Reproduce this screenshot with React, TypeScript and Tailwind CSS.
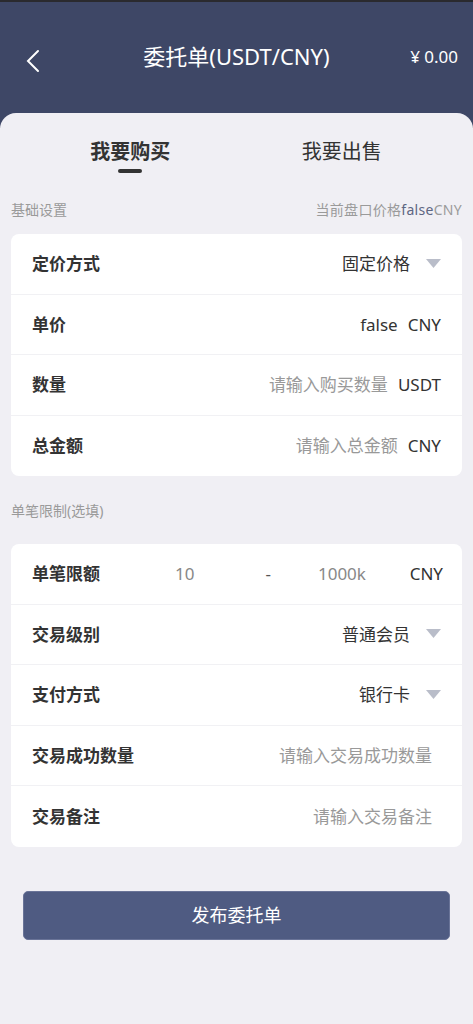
import React from "react";

const font = { fontFamily: '"Noto Sans", "Noto Sans CJK SC", sans-serif' };

const Caret: React.FC = () => (
  <svg width="15" height="10" viewBox="0 0 15 10" className="ml-4">
    <path d="M0 0 H15 L7.5 9 Z" fill="#b9bdc9" />
  </svg>
);

interface RowProps {
  label: string;
  children: React.ReactNode;
  last?: boolean;
}

const Row: React.FC<RowProps> = ({ label, children, last }) => (
  <div
    className={`flex items-center h-[60.5px] pl-[21px] pr-[21px] ${
      last ? "" : "border-b border-[#f1f1f4]"
    }`}
  >
    <span className="text-[17px] font-bold text-[#333]">{label}</span>
    <div className="flex-1 flex items-center justify-end text-[17px]">{children}</div>
  </div>
);

const App: React.FC = () => {
  return (
    <div className="min-h-[1024px] bg-[#f0eff4] flex flex-col" style={font}>
      {/* Header */}
      <div className="bg-[#3e4766] border-t-2 border-[#2a2a2e] h-[128px] shrink-0">
        <div className="relative flex items-center justify-center h-[113px]">
          <svg width="14" height="24" viewBox="0 0 14 24" className="absolute left-[26px] top-[47px]">
            <path d="M12 2 L2 12 L12 22" stroke="#fff" strokeWidth="2" fill="none" strokeLinecap="round" />
          </svg>
          <span className="text-white text-[22px] -mt-[4px]">委托单(USDT/CNY)</span>
          <span className="absolute right-[15px] text-white text-[17px] -mt-[4px]">¥ 0.00</span>
        </div>
      </div>

      {/* Body */}
      <div className="-mt-[15px] rounded-t-[16px] bg-[#f0eff4] flex-1">
        <div className="flex h-[66px] pt-[25px]">
          <div className="flex-1 flex flex-col items-center">
            <span className="text-[20px] font-bold text-[#333] ml-[24px] leading-[28px]">我要购买</span>
            <span className="mt-[3px] ml-[24px] w-[24px] h-[4px] rounded-full bg-[#333]" />
          </div>
          <div className="flex-1 flex flex-col items-center">
            <span className="text-[20px] text-[#333] leading-[28px] -ml-[26px]">我要出售</span>
          </div>
        </div>

        <div className="flex justify-between items-center px-[11px] mt-[21px] text-[14px] leading-[20px] text-[#9a9a9a]">
          <span>基础设置</span>
          <span className="tracking-[0.3px]">
            当前盘口价格<span className="text-[#5d6682]">false</span>CNY
          </span>
        </div>

        <div className="mx-[11px] mt-[14px] bg-white rounded-[8px]">
          <Row label="定价方式">
            <span className="text-[#333]">固定价格</span>
            <Caret />
          </Row>
          <Row label="单价">
            <span className="text-[#333]">false</span>
            <span className="text-[#333] ml-[10px]">CNY</span>
          </Row>
          <Row label="数量">
            <span className="text-[#999]">请输入购买数量</span>
            <span className="text-[#333] ml-[10px]">USDT</span>
          </Row>
          <Row label="总金额" last>
            <span className="text-[#999]">请输入总金额</span>
            <span className="text-[#333] ml-[10px]">CNY</span>
          </Row>
        </div>

        <div className="px-[11px] mt-[25px] text-[14px] leading-[20px] text-[#9a9a9a]">单笔限制(选填)</div>

        <div className="mx-[11px] mt-[23px] bg-white rounded-[8px]">
          <Row label="单笔限额">
            <div className="flex-1 flex items-center text-[17px]">
              <span className="text-[#888] ml-[75px]">10</span>
              <span className="text-[#555] ml-[71px]">-</span>
              <span className="text-[#888] ml-[47px]">1000k</span>
              <span className="text-[#333] ml-auto -mr-[2px]">CNY</span>
            </div>
          </Row>
          <Row label="交易级别">
            <span className="text-[#333]">普通会员</span>
            <Caret />
          </Row>
          <Row label="支付方式">
            <span className="text-[#333]">银行卡</span>
            <Caret />
          </Row>
          <Row label="交易成功数量">
            <span className="text-[#999] mr-[9px]">请输入交易成功数量</span>
          </Row>
          <Row label="交易备注" last>
            <span className="text-[#999] mr-[9px]">请输入交易备注</span>
          </Row>
        </div>

        <div className="px-[23px] mt-[44px]">
          <button className="w-full h-[49px] rounded-[5px] bg-[#4f5b82] border border-[#6a7498] text-white text-[18px]">
            发布委托单
          </button>
        </div>
      </div>
    </div>
  );
};

export default App;
